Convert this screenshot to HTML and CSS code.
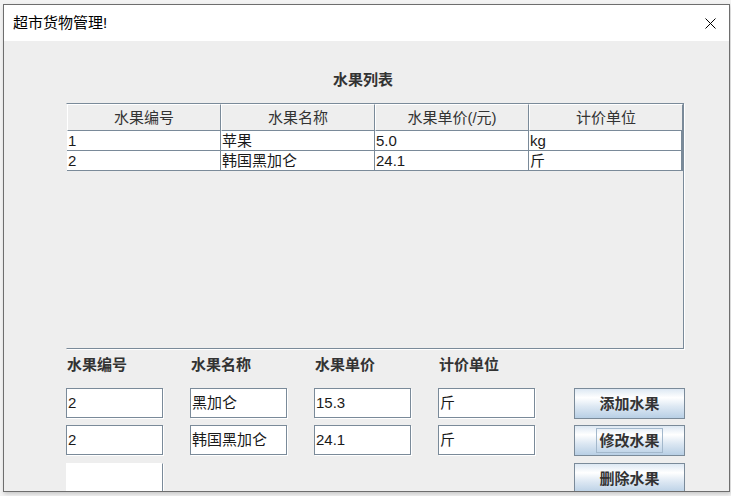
FILE: index.html
```html
<!DOCTYPE html>
<html lang="zh-CN">
<head>
<meta charset="utf-8">
<title>超市货物管理!</title>
<link rel="stylesheet" href="styles.css">
</head>
<body>
<div class="window">
  <div class="titlebar">
    <span class="title">超市货物管理!</span>
    <svg class="close" width="11" height="11" viewBox="0 0 11 11"><path d="M0.5 0.5L10.5 10.5M10.5 0.5L0.5 10.5" stroke="#000" stroke-width="1" fill="none"/></svg>
  </div>
  <div class="content">
    <div class="heading">水果列表</div>
    <div class="scrollpane">
      <div class="thead">
        <div class="th">水果编号</div>
        <div class="th">水果名称</div>
        <div class="th">水果单价(/元)</div>
        <div class="th">计价单位</div>
      </div>
      <div class="tr">
        <div class="td">1</div>
        <div class="td">苹果</div>
        <div class="td">5.0</div>
        <div class="td">kg</div>
      </div>
      <div class="tr">
        <div class="td">2</div>
        <div class="td">韩国黑加仑</div>
        <div class="td">24.1</div>
        <div class="td">斤</div>
      </div>
    </div>
    <div class="lower">
      <div class="form">
        <div class="label">水果编号</div>
        <div class="label">水果名称</div>
        <div class="label">水果单价</div>
        <div class="label">计价单位</div>
        <div class="field">2</div>
        <div class="field">黑加仑</div>
        <div class="field">15.3</div>
        <div class="field">斤</div>
        <div class="field">2</div>
        <div class="field">韩国黑加仑</div>
        <div class="field">24.1</div>
        <div class="field">斤</div>
        <div class="field last"></div>
      </div>
      <div class="buttons">
        <div class="btn">添加水果</div>
        <div class="btn focus"><span class="focus-ring">修改水果</span></div>
        <div class="btn last">删除水果</div>
      </div>
    </div>
  </div>
</div>
</body>
</html>
```

FILE: styles.css
```css
html, body {
  margin: 0;
  padding: 0;
}
body {
  width: 731px;
  height: 496px;
  overflow: hidden;
  background: #f3f3f3;
  font-family: "Liberation Sans", "Noto Sans CJK SC", sans-serif;
}
.window {
  margin: 4px 0 0 3px;
  width: 725px;
  height: 486px;
  border: 1px solid #6e6e6e;
  background: #eeeeee;
  display: flex;
  flex-direction: column;
  overflow: hidden;
  box-shadow: 1px 2px 4px rgba(0, 0, 0, 0.18);
}
.titlebar {
  height: 36px;
  flex: none;
  background: #ffffff;
  display: flex;
  align-items: center;
  justify-content: space-between;
  padding: 0 13px 0 9px;
}
.title {
  font-size: 15px;
  line-height: 20px;
  color: #000;
}
.close {
  display: block;
  margin-top: 1px;
}
.content {
  flex: 1;
  padding-left: 62px;
  overflow: hidden;
}
.heading {
  margin: 29px 0 13px 267px;
  font-weight: bold;
  font-size: 15px;
  line-height: 20px;
  color: #333;
}
.scrollpane {
  width: 616px;
  height: 244px;
  border: 1px solid #7a8a99;
  border-left-color: transparent;
  box-shadow: 1px 1px 0 #ffffff;
  background: #eeeeee;
}
.thead, .tr {
  display: grid;
  grid-template-columns: repeat(4, 154px);
}
.thead {
  height: 27px;
}
.th {
  box-sizing: border-box;
  border-top: 1px solid #ffffff;
  border-left: 1px solid #ffffff;
  border-right: 1px solid #7a8a99;
  border-bottom: 1px solid #7a8a99;
  text-align: center;
  font-size: 15px;
  line-height: 25px;
  color: #333;
}
.tr {
  height: 20px;
}
.td {
  box-sizing: border-box;
  background: #ffffff;
  border-right: 1px solid #7a8a99;
  border-bottom: 1px solid #7a8a99;
  padding-left: 1px;
  font-size: 15px;
  line-height: 19px;
  color: #1a1a1a;
  white-space: nowrap;
  overflow: hidden;
}
.td:last-child {
  border-right-width: 2px;
}
.lower {
  display: flex;
  margin-top: 6px;
}
.form {
  display: grid;
  grid-template-columns: repeat(4, 98px);
  grid-template-rows: 27px 31px 31px 31px;
  column-gap: 26px;
  row-gap: 6px;
}
.label {
  padding-left: 1px;
  font-weight: bold;
  font-size: 15px;
  line-height: 20px;
  color: #333;
}
.field {
  box-sizing: border-box;
  width: 97px;
  height: 30px;
  border: 1px solid #7a8a99;
  box-shadow: 1px 1px 0 #ffffff;
  background: #ffffff;
  padding-left: 1px;
  font-size: 15px;
  line-height: 28px;
  color: #1a1a1a;
  white-space: nowrap;
  overflow: hidden;
}
.field.last {
  margin-top: 1px;
  border-top-color: #ffffff;
  border-left-color: #ffffff;
}
.buttons {
  margin-left: 38px;
  padding-top: 33px;
  display: flex;
  flex-direction: column;
  gap: 6px;
}
.btn {
  box-sizing: border-box;
  width: 111px;
  height: 31px;
  border: 1px solid #7a8a99;
  background: linear-gradient(to bottom, #dde8f3 0%, #ffffff 30%, #dde8f3 60%, #b8cfe5 100%);
  display: flex;
  align-items: center;
  justify-content: center;
  font-weight: bold;
  font-size: 15px;
  line-height: 20px;
  color: #333;
}
.btn.last {
  margin-top: 1px;
}
.focus-ring {
  display: inline-block;
  border: 1px solid #a3b8cc;
  padding: 0 2px;
  line-height: 23px;
}
```
